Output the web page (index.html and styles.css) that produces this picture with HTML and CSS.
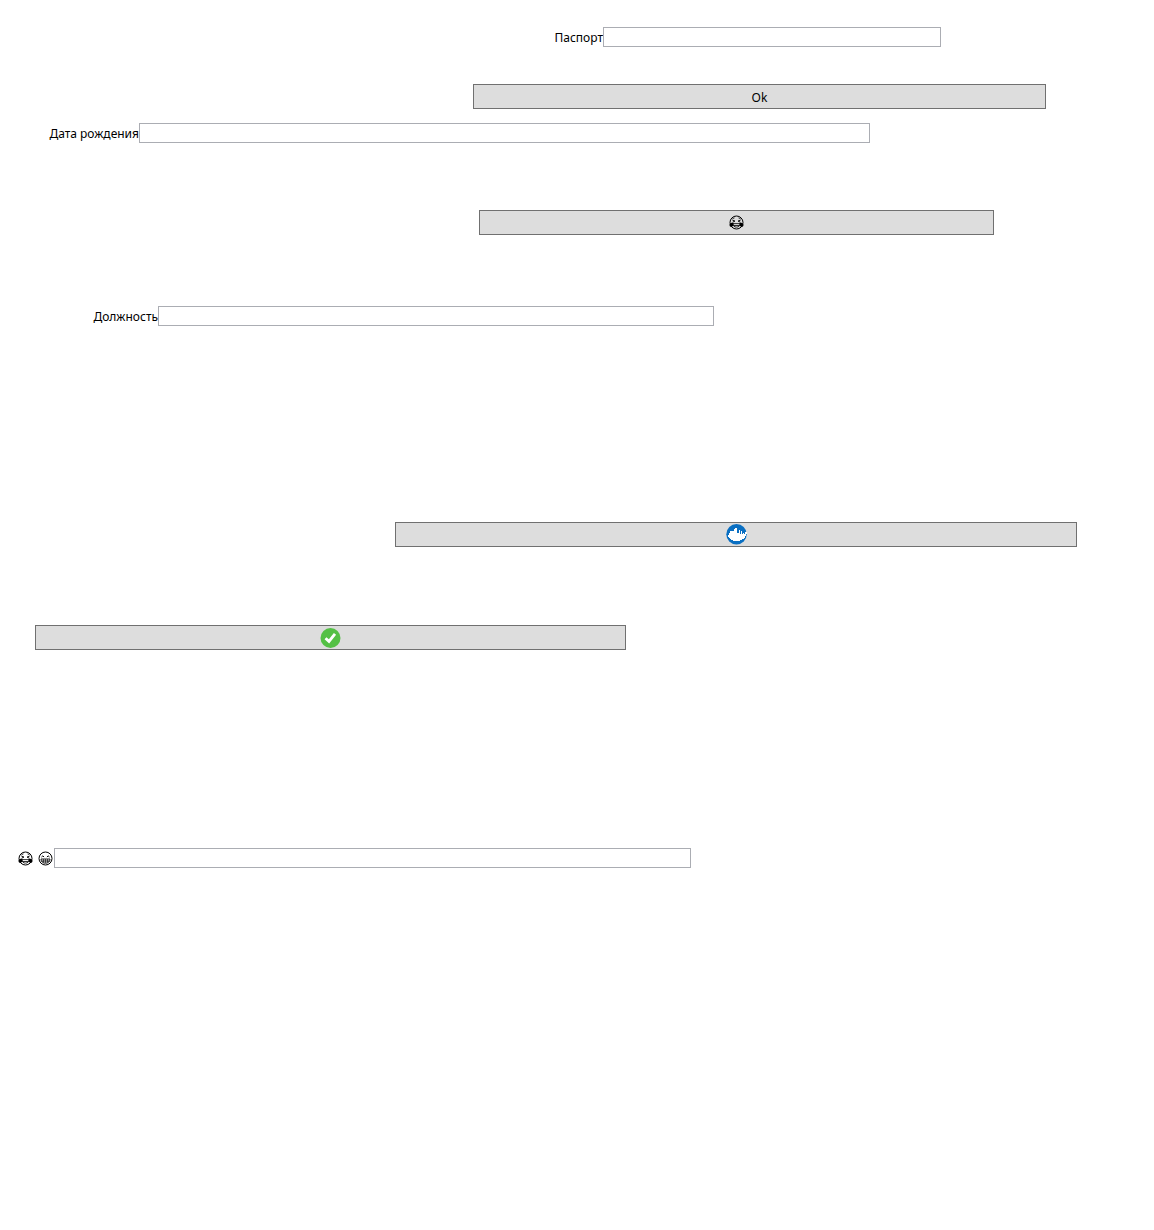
FILE: index.html
```html
<!DOCTYPE html>
<html lang="ru">
<head>
<meta charset="utf-8">
<title>Анкета</title>
<link rel="stylesheet" href="styles.css">
</head>
<body>
<svg class="defs" aria-hidden="true">
  <symbol id="joy" viewBox="0 0 15 15">
    <circle cx="7.500" cy="7.500" r="6.500" fill="none" stroke="#000"/>
    <path d="M3.500 3.700L5.500 2.900M11.500 3.700L9.500 2.900" fill="none" stroke="#000" stroke-width=".8"/>
    <path d="M3.300 5L6 6.100L3.800 7M11.700 5L9 6.100L11.200 7" fill="none" stroke="#000" stroke-width=".9"/>
    <path d="M4 8.600h7c0 2.200-1.300 3.500-3.500 3.500s-3.500-1.300-3.500-3.500zM4.500 10.500h6" fill="none" stroke="#000" stroke-width=".8"/>
    <path d="M4.200 7.600C1.800 7.700.5 8.500.5 10c0 1.200.8 2 1.900 2 1.600 0 2.200-1.700 1.800-4.400zM10.800 7.600c2.400.1 3.700.9 3.700 2.400 0 1.200-.8 2-1.900 2-1.600 0-2.200-1.700-1.800-4.400z"/>
  </symbol>
  <symbol id="grin" viewBox="0 0 15 15">
    <circle cx="7.500" cy="7.500" r="6.500" fill="none" stroke="#000"/>
    <path d="M3.500 6Q4.800 3.800 6.100 6M8.900 6Q10.200 3.800 11.500 6" fill="none" stroke="#000"/>
    <path d="M3 8h9c0 2.600-1.800 4.200-4.500 4.200s-4.500-1.600-4.500-4.200zM3.500 10h8" fill="none" stroke="#000" stroke-width=".9"/>
    <path d="M5.500 8v3.700M7.500 8v4M9.500 8v3.700" stroke="#000" stroke-width=".6"/>
  </symbol>
</svg>
<main class="form">
  <div class="field passport">
    <label for="passport">Паспорт</label>
    <input id="passport" type="text">
  </div>
  <button class="ok" type="button">Ok</button>
  <div class="field birth">
    <label for="birth">Дата рождения</label>
    <input id="birth" type="text">
  </div>
  <button class="laugh" type="button" aria-label="Смех"><svg class="emoji"><use href="#joy"/></svg></button>
  <div class="field position">
    <label for="position">Должность</label>
    <input id="position" type="text">
  </div>
  <button class="city" type="button" aria-label="Город">
    <svg class="badge" viewBox="0 0 21 21">
      <circle cx="10.500" cy="10.200" r="10.200" fill="#0a6fc2"/>
      <path d="M2 11h1V9h1V7h4V5h1V4h2v5h2V6h1v4h1V7h1v3h1V9h1v1h1V8h2v2h-1v2h-1v2h-1v1h-2v1h-2v1H7v-1H5v-1H4v-1H3v-1H2z" fill="#fff"/>
    </svg>
  </button>
  <button class="confirm" type="button" aria-label="Подтвердить">
    <svg class="badge" viewBox="0 0 21 21">
      <circle cx="10.500" cy="11" r="10" fill="#54c045"/>
      <path d="M5.500 11.200L9 14.400L15 6.800" fill="none" stroke="#fff" stroke-width="2.800"/>
    </svg>
  </button>
  <div class="field mood">
    <label for="mood" aria-label="Настроение"><svg class="emoji"><use href="#joy"/></svg><svg class="emoji"><use href="#grin"/></svg></label>
    <input id="mood" type="text">
  </div>
</main>
</body>
</html>
```
FILE: styles.css
```css
* {
  box-sizing: border-box;
}

body {
  margin: 0;
  background: #fff;
  color: #000;
  font: 12px/16px "Noto Sans", "Open Sans", sans-serif;
}

.defs {
  position: absolute;
  width: 0;
  height: 0;
}

.form {
  display: flex;
  flex-direction: column;
  padding-top: 27px;
}

.field {
  display: grid;
  align-items: center;
}

.field label {
  padding-top: 1px;
  text-align: right;
  white-space: nowrap;
}

input {
  width: 100%;
  height: 20px;
  padding: 0 2px;
  border: 1px solid #abadb3;
  border-radius: 0;
  background: #fff;
  font: inherit;
}

button {
  display: flex;
  align-items: center;
  justify-content: center;
  height: 25px;
  padding: 0;
  border: 1px solid #707070;
  border-radius: 0;
  background: #ddd;
  color: #000;
  font: inherit;
}

.emoji {
  display: block;
  width: 15px;
  height: 15px;
}

.badge {
  display: block;
  width: 21px;
  height: 21px;
}

.passport {
  grid-template-columns: 603px 1fr;
  margin-right: 213px;
}

.ok {
  margin: 37px 108px 0 473px;
  padding-top: 2px;
}

.birth {
  grid-template-columns: 139px 1fr;
  margin: 14px 284px 0 0;
}

.laugh {
  margin: 67px 160px 0 479px;
}

.position {
  grid-template-columns: 158px 1fr;
  margin: 71px 440px 0 0;
}

.city {
  margin: 196px 77px 0 395px;
}

.confirm {
  margin: 78px 528px 0 35px;
}

.mood {
  grid-template-columns: 54px 1fr;
  margin: 198px 463px 0 0;
}

.mood label {
  display: flex;
  justify-content: flex-end;
  gap: 5px;
  padding-right: 1px;
}
```
